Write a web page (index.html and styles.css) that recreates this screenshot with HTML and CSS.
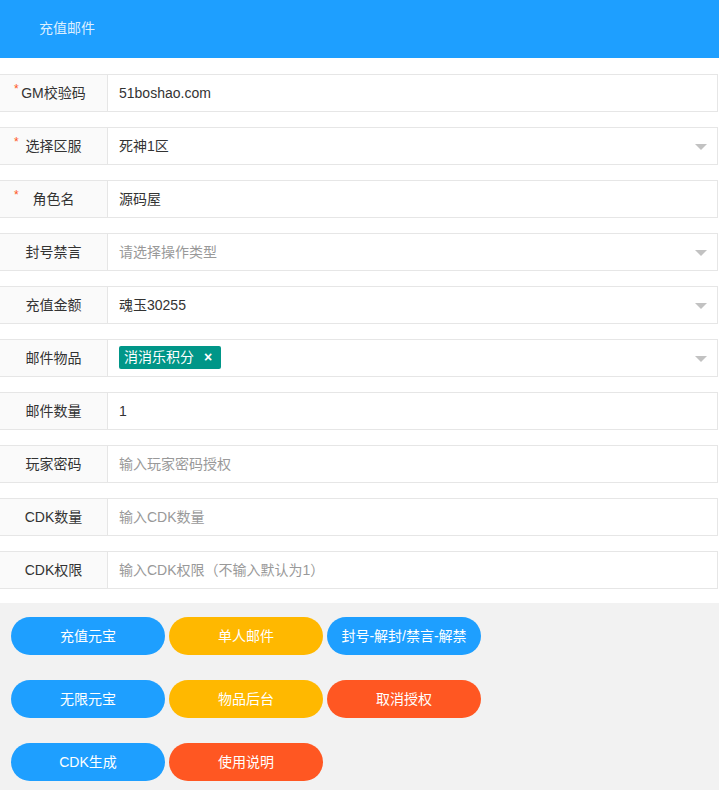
FILE: index.html
```html
<!DOCTYPE html>
<html lang="zh-CN">
<head>
<meta charset="utf-8">
<title>充值邮件</title>
<link rel="stylesheet" href="styles.css">
</head>
<body>
<div class="page">
  <div class="header">充值邮件</div>
  <div class="form">
    <div class="row">
      <div class="label"><span class="star">*</span>GM校验码</div>
      <div class="field">51boshao.com</div>
    </div>
    <div class="row">
      <div class="label"><span class="star">*</span>选择区服</div>
      <div class="field select">死神1区<i class="edge"></i></div>
    </div>
    <div class="row">
      <div class="label"><span class="star">*</span>角色名</div>
      <div class="field">源码屋</div>
    </div>
    <div class="row">
      <div class="label">封号禁言</div>
      <div class="field select ph">请选择操作类型<i class="edge"></i></div>
    </div>
    <div class="row">
      <div class="label">充值金额</div>
      <div class="field select">魂玉30255<i class="edge"></i></div>
    </div>
    <div class="row">
      <div class="label">邮件物品</div>
      <div class="field select"><span class="tag">消消乐积分<b class="close">×</b></span><i class="edge"></i></div>
    </div>
    <div class="row">
      <div class="label">邮件数量</div>
      <div class="field">1</div>
    </div>
    <div class="row">
      <div class="label">玩家密码</div>
      <div class="field ph">输入玩家密码授权</div>
    </div>
    <div class="row">
      <div class="label">CDK数量</div>
      <div class="field ph">输入CDK数量</div>
    </div>
    <div class="row">
      <div class="label">CDK权限</div>
      <div class="field ph">输入CDK权限（不输入默认为1）</div>
    </div>
  </div>
  <div class="actions">
    <div class="btn-row">
      <span class="btn blue">充值元宝</span>
      <span class="btn yellow">单人邮件</span>
      <span class="btn blue">封号-解封/禁言-解禁</span>
    </div>
    <div class="btn-row">
      <span class="btn blue">无限元宝</span>
      <span class="btn yellow">物品后台</span>
      <span class="btn red">取消授权</span>
    </div>
    <div class="btn-row">
      <span class="btn blue">CDK生成</span>
      <span class="btn red">使用说明</span>
    </div>
  </div>
</div>
</body>
</html>
```

FILE: styles.css
```css
* { box-sizing: border-box; }
html, body { margin: 0; padding: 0; background: #fff; }
body {
  font-family: "Liberation Sans", "Noto Sans CJK SC", sans-serif;
  font-size: 14px;
  color: #333;
}
.page { width: 719px; }
.header {
  height: 58px;
  background: #1E9FFF;
  color: rgba(255,255,255,0.85);
  padding-left: 39px;
  line-height: 56px;
  font-size: 14px;
}
.form {
  padding: 16px 0 14px 0;
  display: flex;
  flex-direction: column;
  gap: 15px;
}
.row {
  display: flex;
  height: 38px;
}
.label {
  width: 108px;
  flex: none;
  background: #FAFAFA;
  border: 1px solid #e6e6e6;
  border-left: none;
  text-align: center;
  line-height: 36px;
  color: #333;
  position: relative;
}
.star {
  position: absolute;
  left: 14px;
  top: 8px;
  line-height: 12px;
  color: #FF5722;
  font-size: 12px;
}
.field {
  flex: 1;
  border: 1px solid #e6e6e6;
  border-left: none;
  line-height: 36px;
  padding-left: 11px;
  color: #333;
  position: relative;
  margin-right: 1px;
}
.field.ph { color: #999; }
.edge {
  position: absolute;
  right: 10px;
  top: 16px;
  width: 0;
  height: 0;
  border-style: solid;
  border-width: 6px 6px 0 6px;
  border-color: #c2c2c2 transparent transparent transparent;
}
.tag {
  display: inline-flex;
  align-items: center;
  height: 23px;
  line-height: 23px;
  background: #009688;
  color: #fff;
  padding: 0 9px 0 5px;
  border-radius: 2px;
  vertical-align: 1px;
  font-size: 14px;
}
.close {
  margin-left: 10px;
  font-size: 14px;
  font-weight: bold;
}
.actions {
  background: #F2F2F2;
  padding: 14px 0 9px 11px;
  display: flex;
  flex-direction: column;
  gap: 25px;
}
.btn-row { display: flex; gap: 4px; }
.btn {
  width: 154px;
  height: 38px;
  line-height: 38px;
  border-radius: 100px;
  color: #fff;
  text-align: center;
  font-size: 14px;
}
.blue { background: #1E9FFF; }
.yellow { background: #FFB800; }
.red { background: #FF5722; }
```
